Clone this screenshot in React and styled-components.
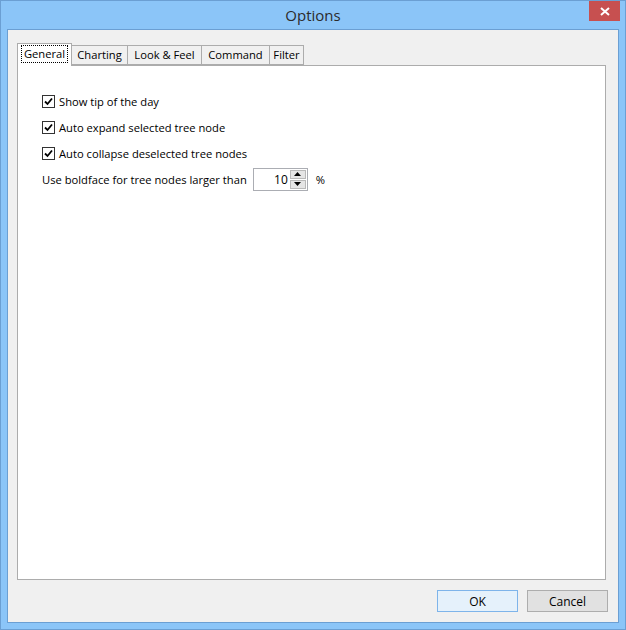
import React, { useState } from 'react'
import styled, { createGlobalStyle } from 'styled-components'

const GlobalStyle = createGlobalStyle`
  html, body {
    margin: 0;
    padding: 0;
    background: #ffffff;
  }
  * {
    box-sizing: border-box;
  }
`

const Window = styled.div`
  width: 626px;
  height: 630px;
  display: flex;
  flex-direction: column;
  background: #8bc5f8;
  border: 1px solid #6b9fd3;
  font-family: 'Open Sans', 'Noto Sans', sans-serif;
  font-size: 11.2px;
  color: #000;
`

const TitleBar = styled.div`
  height: 28px;
  display: grid;
  grid-template-columns: 1fr auto 1fr;
  align-items: start;
`

const Title = styled.div`
  grid-column: 2;
  font-size: 15px;
  line-height: 28px;
  color: #2b2b2b;
`

const CloseButton = styled.button`
  grid-column: 3;
  justify-self: end;
  width: 31px;
  height: 20px;
  margin-right: 5px;
  border: none;
  padding: 0;
  background: #c75050;
  display: flex;
  align-items: center;
  justify-content: center;
`

const Client = styled.div`
  flex: 1;
  margin: 0 6px 6px;
  border: 1px solid #6b9fd3;
  background: #f0f0f0;
  display: flex;
  flex-direction: column;
  padding: 13px 12px 10px 9px;
`

const TabRow = styled.div`
  display: flex;
  align-items: flex-end;
  height: 22px;
  position: relative;
  z-index: 1;
`

const Tab = styled.div`
  width: ${p => p.$width}px;
  height: ${p => (p.$active ? '23px' : '20px')};
  margin-bottom: ${p => (p.$active ? '-1px' : '0')};
  margin-left: ${p => (p.$first ? '0' : '-1px')};
  border: 1px solid #acacac;
  border-bottom: ${p => (p.$active ? 'none' : '1px solid #acacac')};
  background: ${p => (p.$active ? '#ffffff' : '#f0f0f0')};
  display: flex;
  justify-content: center;
  align-items: ${p => (p.$active ? 'flex-start' : 'center')};
  padding-top: ${p => (p.$active ? '2px' : '0')};
  white-space: nowrap;
  line-height: 16px;
`

const FocusLabel = styled.span`
  outline: 1px dotted #000;
  padding: 0 2px;
  line-height: 16px;
`

const Panel = styled.div`
  flex: 1;
  background: #ffffff;
  border: 1px solid #acacac;
  padding: 22px 0 0 24px;
  display: flex;
  flex-direction: column;
`

const Row = styled.div`
  height: 26px;
  display: flex;
  align-items: center;
`

const CheckLabel = styled.label`
  display: flex;
  align-items: center;
  gap: 4px;
  cursor: default;
`

const Box = styled.span`
  width: 13px;
  height: 13px;
  border: 1px solid #333333;
  background: #ffffff;
  display: flex;
  align-items: center;
  justify-content: center;
`

const SpinWrap = styled.div`
  width: 55px;
  height: 23px;
  margin-left: 6px;
  border: 1px solid #abadb3;
  background: #ffffff;
  display: flex;
`

const SpinValue = styled.div`
  flex: 1;
  text-align: right;
  padding-right: 2px;
  line-height: 21px;
  font-size: 12px;
`

const SpinButtons = styled.div`
  width: 16px;
  margin: 1px 1px 1px 0;
  display: flex;
  flex-direction: column;
  gap: 1px;
`

const SpinButton = styled.div`
  flex: 1;
  background: #e5e5e5;
  border: 1px solid #b9b9b9;
  display: flex;
  align-items: center;
  justify-content: center;
`

const Percent = styled.span`
  margin-left: 8px;
`

const ButtonRow = styled.div`
  display: flex;
  justify-content: flex-end;
  gap: 9px;
  margin-top: 10px;
  margin-right: -2px;
`

const DialogButton = styled.button`
  width: 81px;
  height: 22px;
  font-family: inherit;
  font-size: 12px;
  color: #000;
  padding: 0;
  border: 1px solid ${p => (p.$default ? '#7eb4ea' : '#adadad')};
  background: ${p => (p.$default ? '#e5f1fb' : '#e1e1e1')};
`

const CheckIcon = () => (
  <svg width="9" height="9" viewBox="0 0 9 9">
    <path d="M1 4.5 L3.5 7 L8 1.5" fill="none" stroke="#000" strokeWidth="1.8" />
  </svg>
)

const Checkbox = ({ label }) => (
  <CheckLabel>
    <Box><CheckIcon /></Box>
    {label}
  </CheckLabel>
)

const tabs = [
  { label: 'General', width: 55 },
  { label: 'Charting', width: 57 },
  { label: 'Look & Feel', width: 75 },
  { label: 'Command', width: 69 },
  { label: 'Filter', width: 35 },
]

const App = () => {
  const [value] = useState(10)

  return (
    <>
      <GlobalStyle />
      <Window>
        <TitleBar>
          <Title>Options</Title>
          <CloseButton aria-label="Close">
            <svg width="10" height="9" viewBox="0 0 10 9">
              <path d="M1 1 L9 8 M9 1 L1 8" stroke="#fff" strokeWidth="2" />
            </svg>
          </CloseButton>
        </TitleBar>
        <Client>
          <TabRow>
            {tabs.map((t, i) => (
              <Tab key={t.label} $width={t.width} $active={i === 0} $first={i === 0}>
                {i === 0 ? <FocusLabel>{t.label}</FocusLabel> : t.label}
              </Tab>
            ))}
          </TabRow>
          <Panel>
            <Row><Checkbox label="Show tip of the day" /></Row>
            <Row><Checkbox label="Auto expand selected tree node" /></Row>
            <Row><Checkbox label="Auto collapse deselected tree nodes" /></Row>
            <Row>
              Use boldface for tree nodes larger than
              <SpinWrap>
                <SpinValue>{value}</SpinValue>
                <SpinButtons>
                  <SpinButton>
                    <svg width="7" height="4" viewBox="0 0 7 4"><path d="M0 4 L3.5 0 L7 4 Z" fill="#000" /></svg>
                  </SpinButton>
                  <SpinButton>
                    <svg width="7" height="4" viewBox="0 0 7 4"><path d="M0 0 L3.5 4 L7 0 Z" fill="#000" /></svg>
                  </SpinButton>
                </SpinButtons>
              </SpinWrap>
              <Percent>%</Percent>
            </Row>
          </Panel>
          <ButtonRow>
            <DialogButton $default>OK</DialogButton>
            <DialogButton>Cancel</DialogButton>
          </ButtonRow>
        </Client>
      </Window>
    </>
  )
}

export default App
